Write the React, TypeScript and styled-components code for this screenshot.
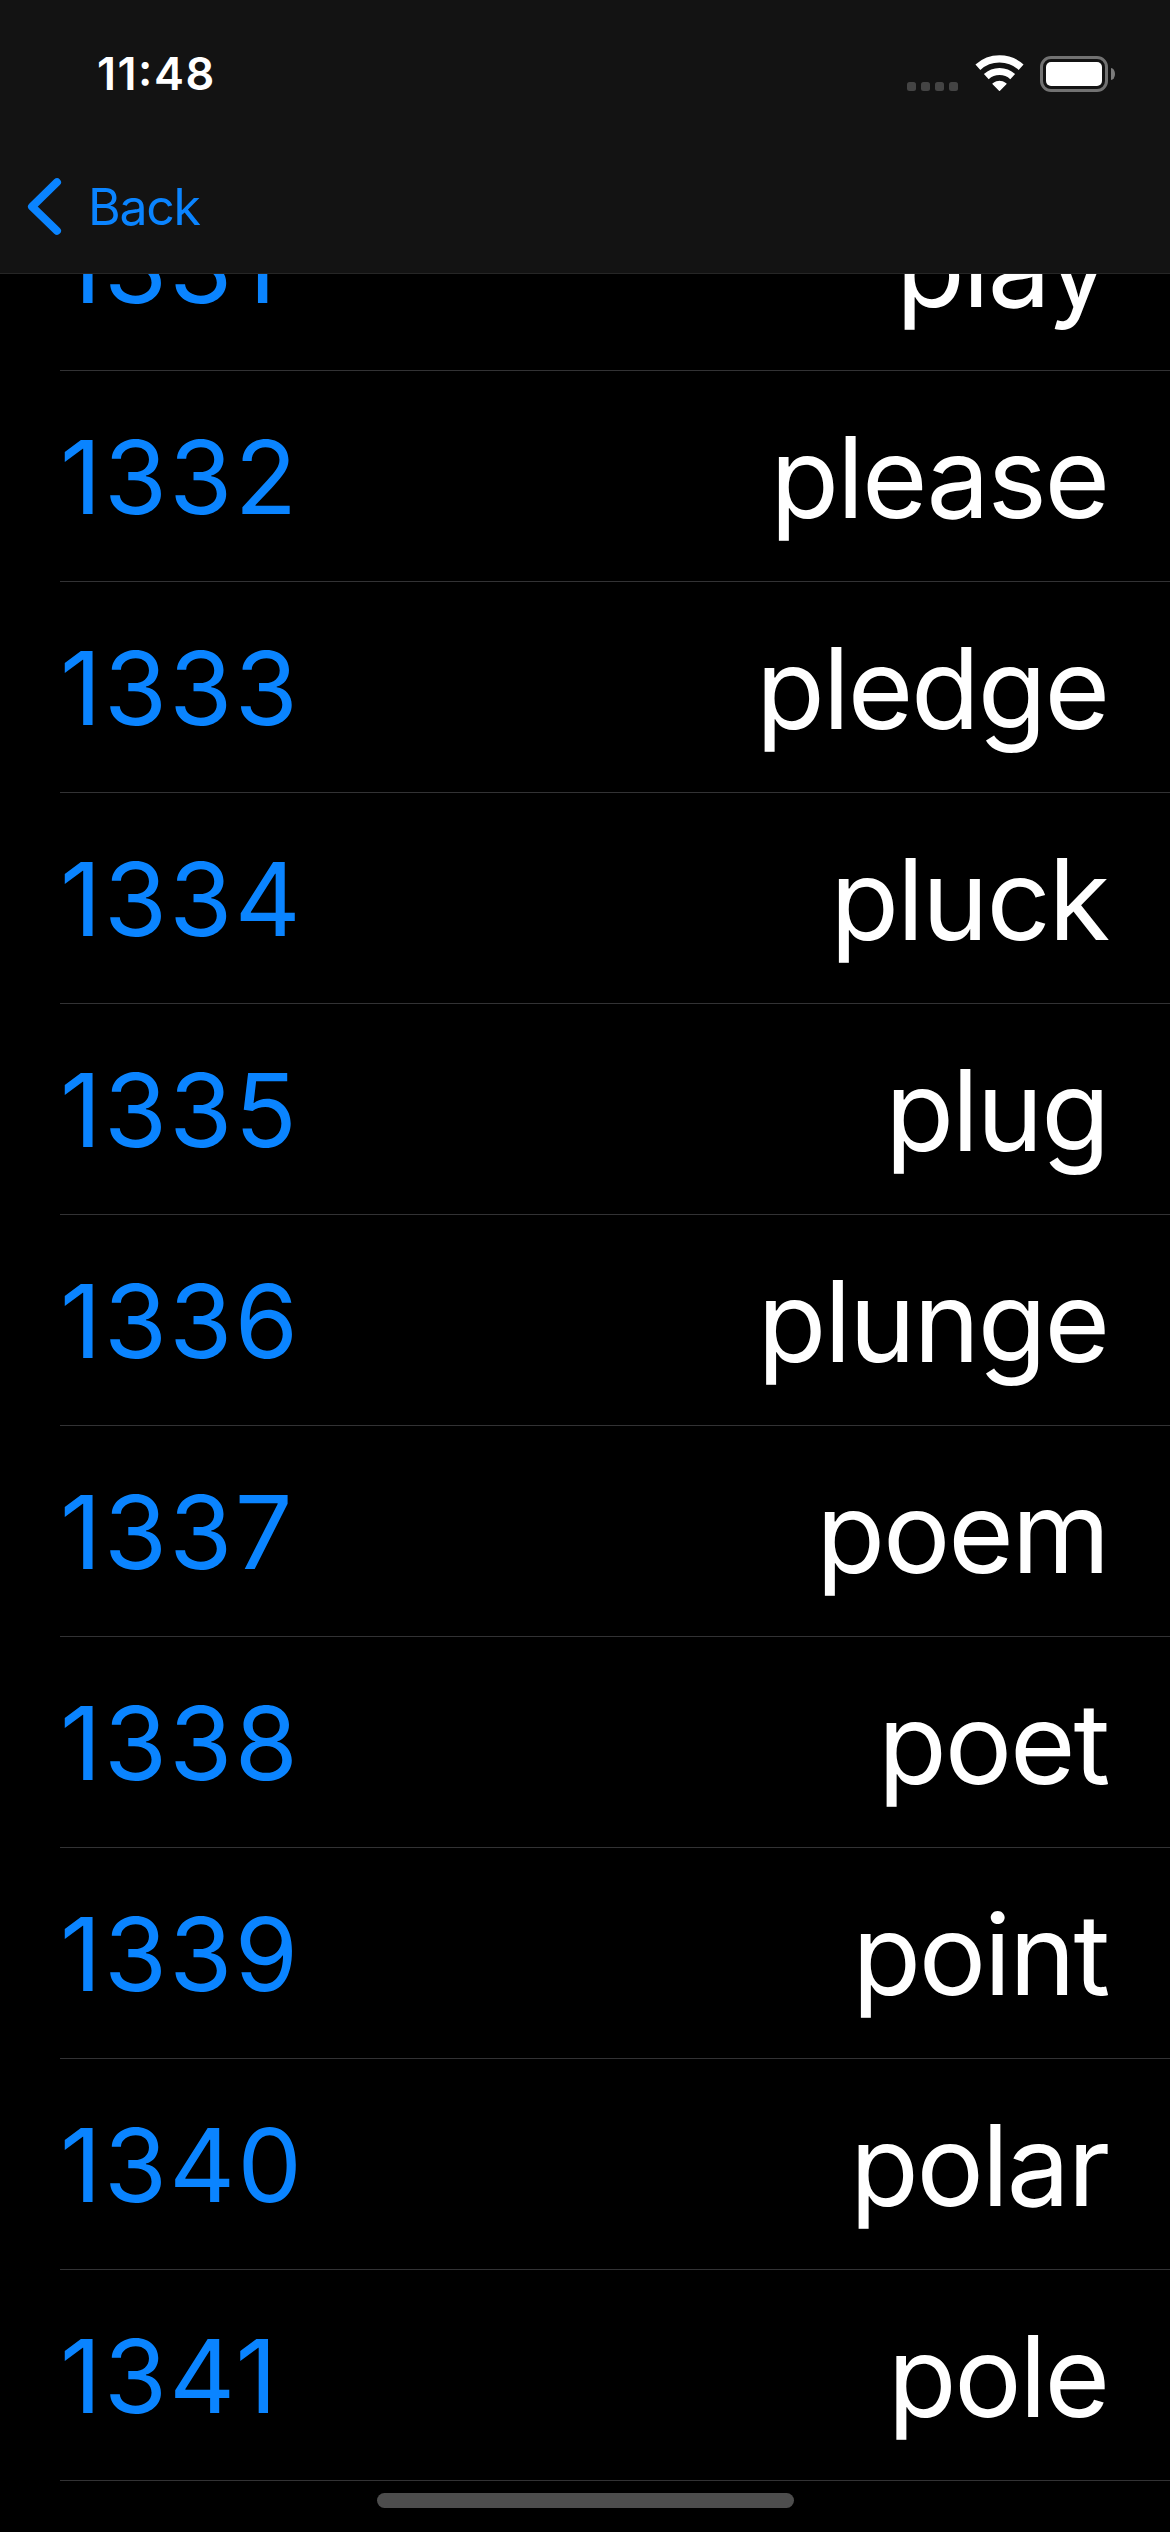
import React from 'react';
import styled, { createGlobalStyle } from 'styled-components';

const GlobalStyle = createGlobalStyle`
  *, *::before, *::after { box-sizing: border-box; }
  html, body { margin: 0; padding: 0; background: #000; }
  body { font-family: Inter, Roboto, "Liberation Sans", sans-serif; }
`;

const Screen = styled.div`
  position: relative;
  display: flex;
  flex-direction: column;
  width: 1170px;
  height: 2532px;
  overflow: hidden;
  background: #000;
`;

const Header = styled.header`
  flex: none;
  display: flex;
  flex-direction: column;
  height: 274px;
  background: #131313;
  border-bottom: 1px solid #262626;
`;

const StatusBar = styled.div`
  display: flex;
  justify-content: space-between;
  align-items: flex-start;
  height: 141px;
  padding: 55px 55px 0 97px;
`;

const Time = styled.div`
  margin-top: -1px;
  color: #fff;
  font-size: 45px;
  font-weight: 600;
  line-height: 40px;
  letter-spacing: 1.5px;
  font-feature-settings: "case";
`;

const Indicators = styled.div`
  display: flex;
  align-items: flex-start;
`;

const Signal = styled.div`
  display: flex;
  gap: 5px;
  margin: 27px 17px 0 0;
`;

const SignalDot = styled.span`
  width: 9px;
  height: 9px;
  border-radius: 2.5px;
  background: #444;
`;

const Battery = styled.div`
  display: flex;
  align-items: center;
  gap: 3px;
  margin: 1px 0 0 16px;
`;

const BatteryShell = styled.div`
  display: flex;
  width: 68px;
  height: 36px;
  padding: 3px;
  border: 3px solid #727272;
  border-radius: 11px;
`;

const BatteryLevel = styled.div`
  flex: 1;
  border-radius: 5px;
  background: #fff;
`;

const BatteryCap = styled.div`
  width: 4px;
  height: 12px;
  border-radius: 0 4px 4px 0 / 0 6px 6px 0;
  background: #7c7c7c;
`;

const NavBar = styled.nav`
  display: flex;
  height: 132px;
  padding-left: 26px;
`;

const BackButton = styled.a`
  display: flex;
  align-items: center;
  gap: 22px;
  color: #0a84ff;
`;

const BackLabel = styled.span`
  font-size: 50px;
  line-height: 60px;
  letter-spacing: -1.3px;
`;

const ListViewport = styled.main`
  flex: 1;
  min-height: 0;
  overflow: hidden;
`;

const WordList = styled.ul`
  list-style: none;
  margin: -114px 0 0;
  padding: 0 0 0 60px;
`;

const Row = styled.li`
  display: flex;
  justify-content: space-between;
  align-items: flex-start;
  height: 211px;
  padding-right: 62px;
  border-bottom: 1px solid #323234;
`;

const Index = styled.span`
  padding-top: 46px;
  color: #0a84ff;
  font-size: 102px;
  line-height: 120px;
  letter-spacing: 2.4px;
`;

const Word = styled.span`
  padding-top: 46px;
  color: #fff;
  font-size: 112.5px;
  line-height: 120px;
  letter-spacing: -2.2px;
`;

const HomeIndicator = styled.div`
  position: absolute;
  left: 377px;
  bottom: 24px;
  width: 417px;
  height: 15px;
  border-radius: 8px;
  background: #4d4d4d;
`;

const WifiIcon = () => (
  <svg width="49" height="37" viewBox="0 0 49 37" fill="none" stroke="#fff">
    <path d="M2.9 12.2A32.2 32.2 0 0 1 46.1 12.2" strokeWidth="7.3" />
    <path d="M11.3 21.6A19.6 19.6 0 0 1 37.7 21.6" strokeWidth="7.1" />
    <path d="M24.5 35.2L18.1 28.8A9.6 9.6 0 0 1 30.9 28.8Z" fill="#fff" strokeWidth="1.4" strokeLinejoin="round" />
  </svg>
);

const ChevronIcon = () => (
  <svg width="40" height="60" viewBox="0 0 40 60" fill="none" stroke="currentColor">
    <path d="M31 5.2L6 29.6L31 53.8" strokeWidth="8" strokeLinecap="round" strokeLinejoin="round" />
  </svg>
);

const firstIndex = 1331;
const words = ['play', 'please', 'pledge', 'pluck', 'plug', 'plunge', 'poem', 'poet', 'point', 'polar', 'pole'];

export default function App() {
  return (
    <Screen>
      <GlobalStyle />
      <Header>
        <StatusBar>
          <Time>11:48</Time>
          <Indicators>
            <Signal>
              {[0, 1, 2, 3].map((dot) => (
                <SignalDot key={dot} />
              ))}
            </Signal>
            <WifiIcon />
            <Battery>
              <BatteryShell>
                <BatteryLevel />
              </BatteryShell>
              <BatteryCap />
            </Battery>
          </Indicators>
        </StatusBar>
        <NavBar>
          <BackButton>
            <ChevronIcon />
            <BackLabel>Back</BackLabel>
          </BackButton>
        </NavBar>
      </Header>
      <ListViewport>
        <WordList>
          {words.map((word, i) => (
            <Row key={word}>
              <Index>{firstIndex + i}</Index>
              <Word>{word}</Word>
            </Row>
          ))}
        </WordList>
      </ListViewport>
      <HomeIndicator />
    </Screen>
  );
}
